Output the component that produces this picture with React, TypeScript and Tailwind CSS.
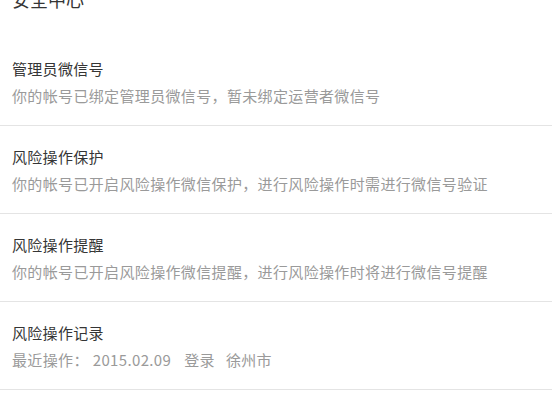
import React from "react";

const font = { fontFamily: '"Noto Sans CJK SC", "Noto Sans", sans-serif' };

function Row({ title, children }: { title: string; children: React.ReactNode }) {
  return (
    <div className="border-b border-[#e4e4e4] pl-[12px] pt-[21px] pb-[19px]">
      <div className="text-[15px] leading-[20px] tracking-[0.3px] text-[#353535]">{title}</div>
      <div className="mt-[7px] text-[15px] leading-[20px] tracking-[0.35px] text-[#9a9a9a] whitespace-nowrap">{children}</div>
    </div>
  );
}

export default function App() {
  return (
    <div className="w-[552px] h-[419px] bg-white overflow-hidden" style={font}>
      <div className="h-[38px] pl-[12px] flex flex-col">
        <h1 className="-mt-[13px] text-[18px] leading-[24px] text-[#353535] font-normal">安全中心</h1>
      </div>
      <Row title="管理员微信号">你的帐号已绑定管理员微信号，暂未绑定运营者微信号</Row>
      <Row title="风险操作保护">你的帐号已开启风险操作微信保护，进行风险操作时需进行微信号验证</Row>
      <Row title="风险操作提醒">你的帐号已开启风险操作微信提醒，进行风险操作时将进行微信号提醒</Row>
      <Row title="风险操作记录">
        <span>最近操作：</span>
        <span className="ml-[4px]">2015.02.09</span>
        <span className="ml-[13px]">登录</span>
        <span className="ml-[11px]">徐州市</span>
      </Row>
    </div>
  );
}
